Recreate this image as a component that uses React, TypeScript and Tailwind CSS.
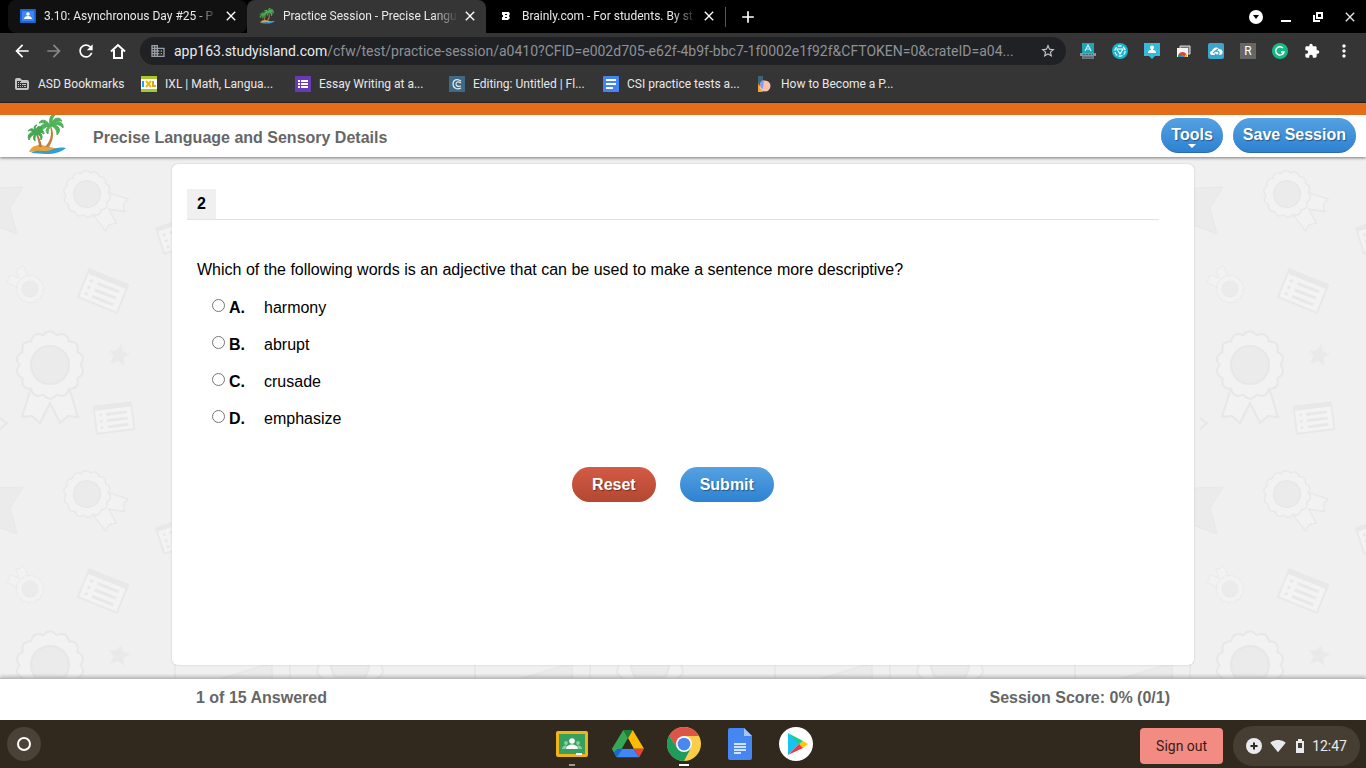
import type { ReactElement, ReactNode } from 'react';
import {
    MdAdd,
    MdArrowBack,
    MdArrowForward,
    MdBusiness,
    MdClose,
    MdExtension,
    MdMoreVert,
    MdRefresh,
    MdSignalWifi4Bar,
    MdStarBorder,
} from 'react-icons/md';

function PalmTree({ className }: { className: string }): ReactElement {
    return (
        <svg viewBox="0 0 40 40" className={className} aria-hidden="true">
            <path d="M3 37C6 30 13 29 20 31c5 1 10 3 15 2l-8 3z" fill="#e9a23b" />
            <path d="M5 38c7-5 13 0 20-3 5-2 8-3 15-2-5 4-11 6-20 6-6 0-10-1-15-1z" fill="#2f9fd6" />
            <path d="M9 17c2 5 4 10 4 15h3c-1-6-3-11-6-16z" fill="#b87945" />
            <path d="M24 11c2 8 1 14-5 21h4c5-8 5-14 2-21z" fill="#c07f45" />
            <path
                d="M24 10C20 4 15 4 13 8c3-1 5 0 6 1-5 1-7 5-4 9 1-4 4-6 8-7-3 3-4 6-1 8 0-4 1-6 3-8 4 1 6 4 6 9 4-4 3-8-2-10 4-1 6 1 8 3 1-5-3-7-8-5 2-2 5-2 7-2-2-4-7-4-10 1 0-3 1-5 3-7-5-1-6 4-5 10z"
                fill="#4fb35a"
                stroke="#4fb35a"
            />
            <path
                d="M10 17c-2-4-6-4-8-1 2-1 4 0 5 1-4 1-6 4-4 8 1-3 3-5 6-6-2 3-2 5 0 7 0-4 0-5 2-7 3 1 4 3 4 6 2-3 1-6-2-8 2 0 3 1 5 2 0-4-3-5-6-4 1-1 2-2 4-2-3-3-6-1-6 3-1-3-1-5 1-6-3 0-4 3-1 7z"
                fill="#45a850"
                stroke="#45a850"
            />
        </svg>
    );
}

/* Tab and bookmark favicons */

function MeetIcon(): ReactElement {
    return (
        <svg viewBox="0 0 16 16" className="size-4" aria-hidden="true">
            <rect y="1" width="16" height="14" rx="1" fill="#1967d2" />
            <rect x="2" y="3" width="12" height="10" fill="#4285f4" />
            <circle cx="8" cy="6" r="1.8" fill="#fff" />
            <path d="M4 11c0-4 8-4 8 0z" fill="#fff" />
        </svg>
    );
}

function BrainlyIcon(): ReactElement {
    return (
        <svg viewBox="0 0 16 16" className="size-4" aria-hidden="true">
            <path d="M4 4h7l1 2-1 2 1 2-2 2H4V9h1V7H4zM7 6v1h2V6zM7 9v1h2V9z" fill="#fff" fillRule="evenodd" />
        </svg>
    );
}

function FolderIcon(): ReactElement {
    return (
        <svg viewBox="0 0 16 16" className="size-4" aria-hidden="true">
            <path d="M1 4q0-2 2-2h3l2 2h5q2 0 2 2v6q0 2-2 2H3q-2 0-2-2z" fill="#c4c4c4" />
            <path d="M3 5h4v2h6v5H3z" fill="#333" />
            <path d="M4 6h1v1H4zM6 6h1v1H6zM4 8h1v1H4zM6 8h1v1H6zM4 10h1v1H4zM6 10h1v1H6zM8 8h4v1H8zM8 10h1v1H8zM10 10h2v1h-2z" fill="#c4c4c4" />
        </svg>
    );
}

function IxlIcon(): ReactElement {
    return (
        <svg viewBox="0 0 16 16" className="size-4" aria-hidden="true">
            <rect width="16" height="16" fill="#fff" />
            <path d="M0 0h16v3H0zM0 13h16v3H0z" fill="#a9c72c" />
            <path d="M2 5v6" stroke="#25a0da" strokeWidth="2" />
            <path d="M5 5l5 6M10 5l-5 6" stroke="#f0b51c" strokeWidth="2" />
            <path d="M12 5v5h3" stroke="#dba50e" strokeWidth="2" fill="none" />
        </svg>
    );
}

function FormsIcon(): ReactElement {
    return (
        <svg viewBox="0 0 16 16" className="size-4" aria-hidden="true">
            <rect width="16" height="16" rx="1" fill="#673ab7" />
            <path d="M3 4h2v2H3zM6 4h7v2H6zM3 7h2v2H3zM6 7h7v2H6zM3 10h2v2H3zM6 10h7v2H6z" fill="#fff" />
        </svg>
    );
}

function FlipgridIcon(): ReactElement {
    return (
        <svg viewBox="0 0 16 16" className="size-4" aria-hidden="true">
            <rect width="16" height="16" fill="#3f6a87" />
            <path d="M12 5C8 2 4 4 4 8s4 6 8 4M12 7C9 5 7 6 7 8s2 3 5 2" stroke="#e6edf1" strokeWidth="1.2" fill="none" />
        </svg>
    );
}

function DocsIcon(): ReactElement {
    return (
        <svg viewBox="0 0 16 16" className="size-4" aria-hidden="true">
            <rect width="16" height="16" rx="1" fill="#4285f4" />
            <path d="M3 3h10v2H3zM3 7h10v2H3zM3 11h7v2H3z" fill="#fff" />
        </svg>
    );
}

function BecomeIcon(): ReactElement {
    return (
        <svg viewBox="0 0 16 16" className="size-4" aria-hidden="true">
            <path d="M1 0h5v8H1z" fill="#3f6478" />
            <path d="M1 7l5 9H1z" fill="#f5a623" />
            <circle cx="8" cy="10" r="5.5" fill="#f7c1ad" />
            <path d="M3 8q1-4 4-4l-1 9q-3-1-3-5z" fill="#8a9be8" />
        </svg>
    );
}

type Tab = { title: string; icon: ReactNode; tone: string };

const tabs: Tab[] = [
    { title: '3.10: Asynchronous Day #25 - P', icon: <MeetIcon />, tone: 'bg-[#111111] rounded-lg' },
    { title: 'Practice Session - Precise Langu', icon: <PalmTree className="size-4" />, tone: 'bg-[#353535] rounded-t-lg' },
    { title: 'Brainly.com - For students. By st', icon: <BrainlyIcon />, tone: 'bg-black rounded-bl-lg' },
];

function TabStrip(): ReactElement {
    return (
        <div className="flex h-[33px] bg-black pl-2">
            {tabs.map((tab) => (
                <div key={tab.title} className={`flex w-[239px] min-w-0 items-center pb-0.5 pl-3 pr-2 ${tab.tone}`}>
                    {tab.icon}
                    <span className="ml-2 w-[176px] whitespace-nowrap text-xs text-[#e8e8e8] [mask-image:linear-gradient(to_right,black_86%,transparent)]">
                        {tab.title}
                    </span>
                    <button aria-label="Close tab" className="ml-1 flex size-4 items-center justify-center text-white">
                        <MdClose className="size-4 shrink-0" />
                    </button>
                </div>
            ))}
            <div className="my-auto h-5 w-px bg-[#555]" />
            <button aria-label="New tab" className="ml-3 text-white">
                <MdAdd className="size-5" />
            </button>
            <div className="ml-auto flex items-center">
                <button aria-label="Search tabs" className="flex w-8 justify-center">
                    <svg viewBox="0 0 14 14" className="size-3.5">
                        <circle cx="7" cy="7" r="7" fill="#fff" />
                        <path d="M4 5h6l-3 4z" fill="#000" />
                    </svg>
                </button>
                <button aria-label="Minimize" className="flex w-7 justify-center">
                    <svg viewBox="0 0 12 12" className="size-3">
                        <path d="M1 9h10v2H1z" fill="#fff" />
                    </svg>
                </button>
                <button aria-label="Restore" className="flex w-9 justify-center">
                    <svg viewBox="0 0 12 12" className="size-3" fill="none" stroke="#fff" strokeWidth="2">
                        <path d="M5 2h5v5H5zM2 4v6h6" />
                    </svg>
                </button>
                <button aria-label="Close window" className="mr-0.5 flex w-7 justify-center text-[#e8e8e8]">
                    <MdClose className="size-4" />
                </button>
            </div>
        </div>
    );
}

function Extensions(): ReactElement {
    return (
        <div className="flex items-center">
            <button aria-label="Read aloud" className="flex w-8 justify-center">
                <svg viewBox="0 0 16 16" className="size-4">
                    <path d="M2 0h12v10H2z" fill="#1ea6b8" />
                    <path d="M5 8l3-6 3 6M6 6h4" stroke="#c7f2f6" strokeWidth="1.2" fill="none" />
                    <path d="M0 10h16v3H0z" fill="#8b9298" />
                    <path d="M2 13h12v3H2z" fill="#6f777d" />
                    <path d="M3 11.500h10M4 14.500h8" stroke="#3a6a72" strokeDasharray="2 1" />
                </svg>
            </button>
            <button aria-label="Screen sharing" className="flex w-8 justify-center">
                <svg viewBox="0 0 16 16" className="size-4">
                    <circle cx="8" cy="8" r="8" fill="#12b5cb" />
                    <circle cx="8" cy="8" r="5.2" fill="none" stroke="#fff" strokeWidth="1.2" strokeDasharray="4 1.4" />
                    <path d="M5 6h6l-3 5z" fill="none" stroke="#fff" strokeWidth="1.2" />
                </svg>
            </button>
            <button aria-label="Classroom helper" className="flex w-8 justify-center">
                <svg viewBox="0 0 16 16" className="size-4">
                    <path d="M0 0h16v13h-5l-3 3-3-3H0z" fill="#35b8dc" />
                    <circle cx="8" cy="4.500" r="2" fill="#fff" />
                    <path d="M7 6h2v1q3 0 3 3H4q0-3 3-3z" fill="#fff" />
                </svg>
            </button>
            <button aria-label="Web store" className="flex w-8 justify-center">
                <svg viewBox="0 0 16 16" className="size-4">
                    <path d="M4 3h10v8H4z" fill="#777" stroke="#e0e0e0" />
                    <path d="M1 5h11v9H1z" fill="#f4f4f4" />
                    <path d="M2 14a4.500 5 0 0 1 9 0z" fill="#db4437" />
                    <path d="M2 14a4.500 5 0 0 1 1.500-3.500L6 14z" fill="#0f9d58" />
                    <path d="M11 14a4.500 5 0 0 0-1-3l-2 3z" fill="#f4b400" />
                    <path d="M4.500 14a2 2 0 0 1 4 0z" fill="#4285f4" />
                </svg>
            </button>
            <button aria-label="Cloud sync" className="flex w-8 justify-center">
                <svg viewBox="0 0 16 16" className="size-4">
                    <rect width="16" height="16" rx="2" fill="#3ba5cc" />
                    <path d="M4 12a2 2 0 0 1 0-4 4 4 0 0 1 7-2 3 3 0 0 1 1 6z" fill="#fff" />
                    <path d="M5 10l5-4M7 10.500a2 2 0 0 0 4-1 2 2 0 0 0-3-1" stroke="#3ba5cc" strokeWidth="1.2" fill="none" />
                </svg>
            </button>
            <button aria-label="R extension" className="mx-2 size-4 bg-[#666] text-xs leading-4 text-white">
                R
            </button>
            <button aria-label="Grammarly" className="flex w-8 justify-center">
                <svg viewBox="0 0 16 16" className="size-4">
                    <circle cx="8" cy="8" r="8" fill="#15b887" />
                    <path d="M11 5a4.2 4.2 0 1 0 1 4H9" stroke="#fff" strokeWidth="1.4" fill="none" />
                </svg>
            </button>
            <button aria-label="Extensions" className="flex w-8 justify-center text-white">
                <MdExtension className="size-4" />
            </button>
            <button aria-label="Menu" className="flex w-8 justify-center text-white">
                <MdMoreVert className="size-5" />
            </button>
        </div>
    );
}

function Toolbar(): ReactElement {
    return (
        <div className="flex h-9 items-center bg-[#353535] pl-1.5 pr-1.5 text-white">
            <button aria-label="Back" className="flex w-8 justify-center">
                <MdArrowBack className="size-5" />
            </button>
            <button aria-label="Forward" className="flex w-8 justify-center text-[#888]">
                <MdArrowForward className="size-5" />
            </button>
            <button aria-label="Reload" className="flex w-8 justify-center">
                <MdRefresh className="size-5" />
            </button>
            <button aria-label="Home" className="flex w-8 justify-center">
                <svg viewBox="0 0 16 16" className="size-4" fill="none" stroke="#fff" strokeWidth="2">
                    <path d="M1 8.500L8 2l7 6.500M4 7v8h8V7" />
                </svg>
            </button>
            <div className="ml-1.5 mr-1.5 flex h-7 min-w-0 flex-1 items-center rounded-full bg-[#202124] pl-2.5 pr-2.5">
                <MdBusiness className="size-4 shrink-0 text-[#9aa0a6]" />
                <p className="ml-2 min-w-0 flex-1 whitespace-nowrap text-sm text-[#8e9196]">
                    <span className="text-[#e8eaed]">app163.studyisland.com</span>
                    /cfw/test/practice-session/a0410?CFID=e002d705-e62f-4b9f-bbc7-1f0002e1f92f&amp;CFTOKEN=0&amp;crateID=a04...
                </p>
                <button aria-label="Bookmark this page" className="text-[#d0d0d0]">
                    <MdStarBorder className="size-4" />
                </button>
            </div>
            <Extensions />
        </div>
    );
}

const bookmarks = [
    { label: 'IXL | Math, Langua...', icon: <IxlIcon /> },
    { label: 'Essay Writing at a...', icon: <FormsIcon /> },
    { label: 'Editing: Untitled | Fl...', icon: <FlipgridIcon /> },
    { label: 'CSI practice tests a...', icon: <DocsIcon /> },
    { label: 'How to Become a P...', icon: <BecomeIcon /> },
];

function BookmarksBar(): ReactElement {
    return (
        <nav className="flex h-[34px] items-start border-b border-[#2a2320] bg-[#353535] pl-3.5 pt-[7px] text-xs text-[#e8e8e8]">
            <a href="#asd" className="flex w-[127px] shrink-0 items-center gap-2">
                <FolderIcon />
                ASD Bookmarks
            </a>
            {bookmarks.map((item) => (
                <a key={item.label} href="#bookmark" className="flex w-[154px] shrink-0 items-center gap-2 whitespace-nowrap">
                    {item.icon}
                    {item.label}
                </a>
            ))}
        </nav>
    );
}

/* Wallpaper behind the question card */

function scallop(radius: number, teeth: number): string {
    const points: string[] = [];
    for (let i = 0; i < teeth; i++) {
        const a = (i / teeth) * Math.PI * 2;
        const b = ((i + 0.5) / teeth) * Math.PI * 2;
        const c = ((i + 1) / teeth) * Math.PI * 2;
        const inner = radius * 0.95;
        const outer = radius * 1.18;
        if (i === 0) points.push(`M${inner * Math.cos(a)} ${inner * Math.sin(a)}`);
        points.push(`Q${outer * Math.cos(b)} ${outer * Math.sin(b)} ${inner * Math.cos(c)} ${inner * Math.sin(c)}`);
    }
    return points.join('') + 'Z';
}

function Medal({ transform }: { transform: string }): ReactElement {
    return (
        <g transform={transform} fill="#f2f2f2" stroke="#e7e7e7" strokeWidth="2">
            <path d="M-20 26l-8 26 10-1 8 7 10-20 10 20 8-7 10 1-8-26z" />
            <path d={scallop(32, 14)} />
            <circle r="19" fill="#ebebeb" />
        </g>
    );
}

function Sheet({ transform }: { transform: string }): ReactElement {
    return (
        <g transform={transform} fill="#f3f3f3" stroke="#e8e8e8" strokeWidth="2">
            <path d="M-21-15h42v30h-42z" />
            <path d="M-21-13h42" strokeWidth="5" />
            <path d="M-8-5h23M-8 2h23M-8 9h23M-16-5h3M-16 2h3M-16 9h3" strokeWidth="3" />
        </g>
    );
}

const starPath = 'M0-11l3 7 8 1-6 5 2 8-7-4-7 4 2-8-6-5 8-1z';

function Wallpaper(): ReactElement {
    return (
        <svg className="absolute inset-0 size-full" aria-hidden="true">
            <defs>
                <pattern id="awards" width="300" height="300" patternUnits="userSpaceOnUse">
                    <path d="M-30 32l53-2-13 21 7 26-27-10z" fill="#ebebeb" stroke="#e7e7e7" />
                    <path d="M270 32l53-2-13 21 7 26-27-10z" fill="#ebebeb" stroke="#e7e7e7" />
                    <Medal transform="translate(87 37) rotate(-55) scale(.7)" />
                    <Medal transform="translate(30 132) rotate(135) scale(.42)" />
                    <Medal transform="translate(50 208)" />
                    <Sheet transform="translate(103 134) rotate(22)" />
                    <Sheet transform="translate(114 261) rotate(-7) scale(.9)" />
                    <Sheet transform="translate(178 78) rotate(-18) scale(.9)" />
                    <path d={starPath} transform="translate(119 198) rotate(10)" fill="#e9e9e9" />
                    <path d="M0 261l7 5-7 6" fill="none" stroke="#e7e7e7" strokeWidth="2" />
                    <path d="M220 222l52-16v16zM175 160v62M290 206v24" fill="#ebebeb" stroke="#e8e8e8" strokeWidth="2" />
                </pattern>
            </defs>
            <rect width="100%" height="100%" fill="url(#awards)" />
        </svg>
    );
}

const pill = 'rounded-full font-bold text-white [text-shadow:1px_1px_1px_rgba(0,0,0,0.4)]';
const bluePill = 'bg-linear-to-b from-[#55a1e1] to-[#2d82d2]';

function Header(): ReactElement {
    return (
        <header className="relative z-10 flex h-[54px] items-start border-t-[12px] border-[#e36d19] bg-white pl-[26px] pr-2.5 shadow-[0_1px_3px_rgba(0,0,0,0.5)]">
            <PalmTree className="size-10" />
            <h1 className="ml-[27px] mt-[11px] font-bold text-[#666]">Precise Language and Sensory Details</h1>
            <div className="ml-auto mt-[3px] flex gap-2.5">
                <button className={`relative h-[35px] border-b border-[#2a6cab] px-2.5 ${pill} ${bluePill}`}>
                    Tools
                    <svg viewBox="0 0 8 4" className="absolute bottom-1 left-1/2 h-1 w-2 -translate-x-1/2">
                        <path d="M0 0h8L4 4z" fill="#fff" />
                    </svg>
                </button>
                <button className={`h-[35px] border-b border-[#2a6cab] px-2.5 ${pill} ${bluePill}`}>Save Session</button>
            </div>
        </header>
    );
}

const choices = [
    { letter: 'A.', word: 'harmony' },
    { letter: 'B.', word: 'abrupt' },
    { letter: 'C.', word: 'crusade' },
    { letter: 'D.', word: 'emphasize' },
];

function Question(): ReactElement {
    return (
        <form
            onSubmit={(event) => event.preventDefault()}
            className="relative w-full max-w-[1022px] flex-1 rounded-md bg-white pl-[15px] pr-[35px] pt-[25px] shadow-[0_0_2px_rgba(0,0,0,0.2)]"
        >
            <div className="flex border-b border-[#e2e2e2]">
                <span className="bg-[#f0f0f0] px-2.5 py-[3px] font-bold">2</span>
            </div>
            <fieldset className="px-2.5">
                <legend className="pt-[38px]">
                    Which of the following words is an adjective that can be used to make a sentence more descriptive?
                </legend>
                <div className="flex flex-col gap-[13px] pl-[15px] pt-[14px]">
                    {choices.map((choice) => (
                        <label key={choice.word} className="flex items-start">
                            <input
                                type="radio"
                                name="answer"
                                value={choice.word}
                                className="mt-[3px] size-[13px] appearance-none rounded-full border border-[#767676] bg-white checked:border-4 checked:border-[#2d82d2]"
                            />
                            <b className="ml-1 w-[35px]">{choice.letter}</b>
                            {choice.word}
                        </label>
                    ))}
                </div>
            </fieldset>
            <div className="mt-9 flex justify-center gap-6">
                <button type="reset" className={`h-[35px] bg-linear-to-b from-[#d45a44] to-[#b34832] px-5 ${pill}`}>
                    Reset
                </button>
                <button type="submit" className={`h-[35px] px-5 ${pill} ${bluePill}`}>
                    Submit
                </button>
            </div>
        </form>
    );
}

/* Launcher icons */

const apps = [
    {
        name: 'Classroom',
        mark: 'w-1.5 bg-[#a09a92]',
        icon: (
            <svg viewBox="0 0 32 32" className="size-8">
                <rect y="3" width="32" height="26" rx="2" fill="#f0b31a" />
                <rect x="3" y="6" width="26" height="20" fill="#35a15c" />
                <circle cx="16" cy="13" r="2.800" fill="#fff" />
                <path d="M10 21c0-6 12-6 12 0z" fill="#fff" />
                <circle cx="10" cy="15" r="1.900" fill="#8fcfa5" />
                <circle cx="22" cy="15" r="1.900" fill="#8fcfa5" />
                <path d="M6 21c0-4 5-4 5-3l-2 3zM26 21c0-4-5-4-5-3l2 3z" fill="#8fcfa5" />
                <path d="M20 25h6v2h-6z" fill="#fff" />
            </svg>
        ),
    },
    {
        name: 'Drive',
        mark: '',
        icon: (
            <svg viewBox="0 0 34 32" className="size-8">
                <path d="M12 1h10l-5 9z" fill="#188038" />
                <path d="M12 1L0 21l5 9 12-20z" fill="#34a853" />
                <path d="M22 1l-5 9 6 11h11z" fill="#fbbc04" />
                <path d="M11 21h12l6 9H5z" fill="#4285f4" />
                <path d="M11 21l-6 9-5-9z" fill="#34a853" />
                <path d="M11 21l-6 9-3-5 4-4z" fill="#1967d2" />
                <path d="M23 21h11l-5 9z" fill="#ea4335" />
                <path d="M17 10l6 11H11z" fill="#31291e" />
            </svg>
        ),
    },
    {
        name: 'Chrome',
        mark: 'w-2.5 bg-white',
        icon: (
            <svg viewBox="0 0 32 32" className="size-[34px]">
                <circle cx="16" cy="16" r="16" fill="#fccd48" />
                <path d="M2.100 8A16 16 0 0 1 30 8.500H16L9.500 20z" fill="#de5448" />
                <path d="M2.100 8A16 16 0 0 0 16 32l6.500-12.200L9.500 19.800z" fill="#1c9d5b" />
                <circle cx="16" cy="16" r="7.500" fill="#fff" />
                <circle cx="16" cy="16" r="6" fill="#4a87ee" />
            </svg>
        ),
    },
    {
        name: 'Docs',
        mark: '',
        icon: (
            <svg viewBox="0 0 24 32" className="h-8 w-6">
                <path d="M2 0h14l8 8v22a2 2 0 0 1-2 2H2a2 2 0 0 1-2-2V2a2 2 0 0 1 2-2z" fill="#4586f0" />
                <path d="M16 0l8 8h-8z" fill="#a6c5fa" />
                <path d="M6 16h12M6 19h12M6 22h12M6 25h7" stroke="#fff" strokeWidth="1.400" />
            </svg>
        ),
    },
    {
        name: 'Play Store',
        mark: '',
        icon: (
            <svg viewBox="0 0 34 34" className="size-[34px]">
                <circle cx="17" cy="17" r="17" fill="#fff" />
                <path d="M9 6v22l11-11z" fill="#15c5f0" />
                <path d="M9 6l15 8-4 4z" fill="#17ce91" />
                <path d="M24 14l5 3-5 4-4-4z" fill="#fdc60c" />
                <path d="M9 28l11-11 4 4z" fill="#e8394c" />
            </svg>
        ),
    },
];

function Shelf(): ReactElement {
    return (
        <footer className="flex h-12 items-center bg-[#31291e] pl-[7px] pr-1.5 font-[Roboto,sans-serif]">
            <div className="flex flex-1">
                <button aria-label="Launcher" className="flex size-[34px] items-center justify-center rounded-full bg-[#4a4236]">
                    <span className="size-3.5 rounded-full border-2 border-white" />
                </button>
            </div>
            <div className="flex h-full">
                {apps.map((app) => (
                    <button key={app.name} aria-label={app.name} className="relative flex w-14 items-center justify-center">
                        {app.icon}
                        <span className={`absolute bottom-0.5 left-1/2 h-0.5 -translate-x-1/2 ${app.mark}`} />
                    </button>
                ))}
            </div>
            <div className="flex flex-1 items-center justify-end gap-2.5">
                <button className="mt-1 h-9 w-[83px] rounded bg-[#f28b82] text-sm text-[#3c1a17]">Sign out</button>
                <button className="mt-1 flex h-10 items-center rounded-full bg-[#463e33] px-[13px] text-sm text-[#e8eaed]">
                    <svg viewBox="0 0 16 16" className="size-4">
                        <circle cx="8" cy="8" r="8" fill="#e8eaed" />
                        <path d="M8 4.500v7M4.500 8h7" stroke="#31291e" strokeWidth="2" />
                    </svg>
                    <MdSignalWifi4Bar className="ml-2 size-4" />
                    <svg viewBox="0 0 8 14" className="ml-2.5 h-3.5 w-2">
                        <path d="M2 0h4v2h2v12H0V2h2z" fill="#e8eaed" />
                        <path d="M2 4h4v5H2z" fill="#463e33" />
                    </svg>
                    <span className="ml-2">12:47</span>
                </button>
            </div>
        </footer>
    );
}

function App(): ReactElement {
    return (
        <div className="flex min-h-screen flex-col font-['Liberation_Sans',Arial,sans-serif] text-base text-black">
            <div className="font-[Roboto,sans-serif]">
                <TabStrip />
                <Toolbar />
                <BookmarksBar />
            </div>
            <Header />
            <main className="relative flex flex-1 flex-col items-center bg-[#f0f0f0] pb-[13px] pt-[7px]">
                <Wallpaper />
                <Question />
            </main>
            <section className="relative h-[42px] border-t border-[#bbb] bg-white shadow-[0_-2px_3px_rgba(0,0,0,0.2)]">
                <div className="mx-auto flex max-w-[1022px] justify-between px-6 pt-[7px] font-bold text-[#666]">
                    <p>1 of 15 Answered</p>
                    <p>Session Score: 0% (0/1)</p>
                </div>
            </section>
            <Shelf />
        </div>
    );
}

export default App;
